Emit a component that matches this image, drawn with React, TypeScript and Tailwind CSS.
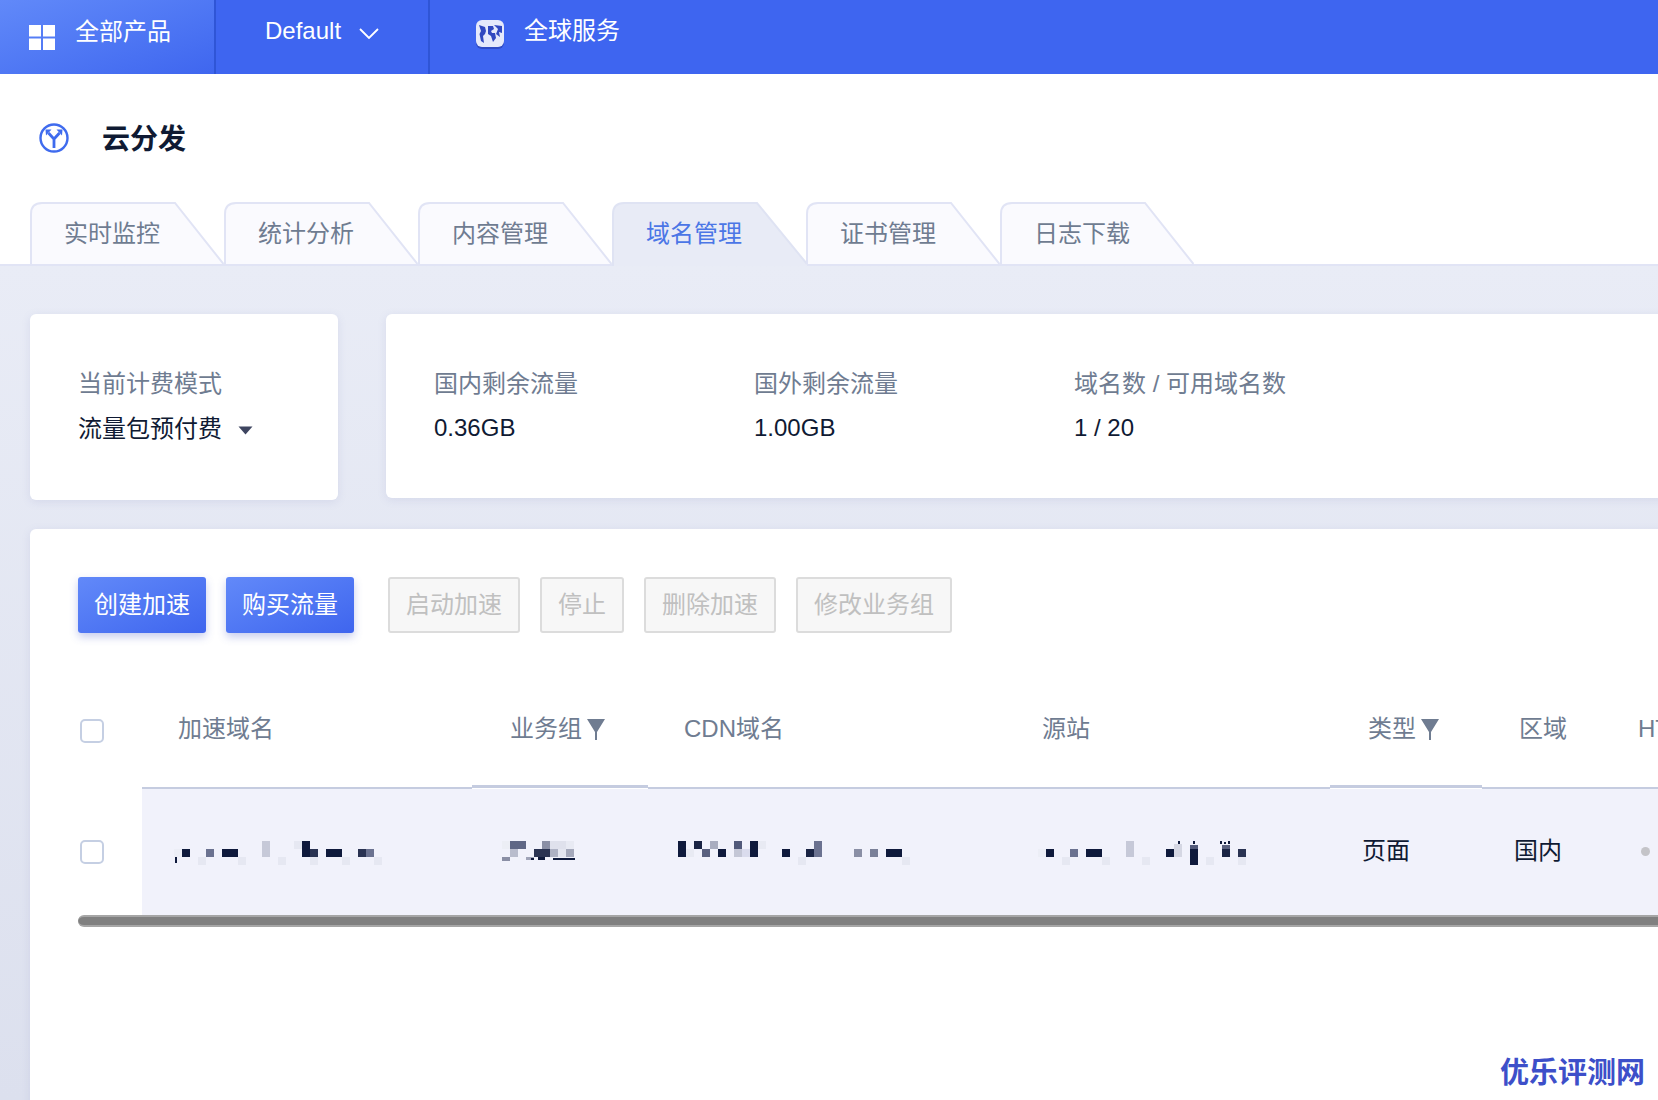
import React from "react";

const D = "#0f1a3c";
const M = "#2a3352";
const G = "#6b7290";
const S = "#c6c9d8";
const L = "#e6e8f2";
type R = [number, number, number, number, string];

const mosaic1: R[] = [
  [9, 20, 8, 8, "#eceef6"], [17, 20, 8, 8, D], [10, 28, 2, 6, D], [41, 20, 8, 8, G], [57, 20, 16, 8, D],
  [97, 12, 8, 16, S], [129, 12, 8, 8, L], [137, 12, 8, 16, D], [145, 20, 8, 8, M], [161, 20, 16, 8, D],
  [193, 20, 8, 8, M], [201, 20, 8, 8, G], [33, 28, 8, 8, L], [73, 28, 8, 8, L], [113, 28, 8, 8, L],
  [145, 28, 8, 8, L], [177, 28, 8, 8, L], [209, 28, 8, 8, L],
];
const mosaic2: R[] = [
  [12, 12, 8, 8, "#eceef5"], [20, 12, 16, 8, "#5f6785"], [20, 20, 8, 8, "#b9bdcd"], [12, 28, 8, 4, "#8a8fa5"],
  [36, 28, 8, 3, "#a0a4b8"], [52, 12, 8, 8, "#8a8fa5"], [44, 20, 16, 8, M], [60, 12, 8, 8, "#dfe1ec"],
  [68, 12, 8, 8, "#dfe1ec"], [76, 12, 8, 8, "#e8eaf3"], [60, 20, 8, 8, "#aeb2c4"], [68, 20, 8, 8, "#e4e6f0"],
  [76, 20, 8, 8, "#a5a9bb"], [41, 29, 3, 2, D], [48, 28, 7, 3, D], [63, 29, 8, 2, D], [71, 29, 14, 2, D],
];
const mosaic3: R[] = [
  [8, 12, 8, 16, D], [16, 20, 8, 8, "#e8eaf3"], [24, 12, 8, 8, "#1a2444"], [40, 12, 8, 8, "#a9adc0"],
  [32, 20, 8, 8, "#5a617f"], [48, 20, 8, 8, D], [64, 12, 8, 8, "#525a7a"], [64, 20, 8, 8, "#c4c7d6"],
  [72, 20, 8, 8, "#dadced"], [80, 12, 8, 16, D], [88, 12, 8, 8, "#e8eaf3"], [112, 20, 8, 8, D],
  [136, 20, 8, 8, "#1a2444"], [144, 12, 8, 16, "#6b7290"], [128, 28, 8, 8, L], [184, 20, 8, 8, "#8a8fa5"],
  [200, 20, 8, 8, "#7a8098"], [216, 20, 16, 8, D], [232, 28, 8, 8, L],
];
const mosaic4: R[] = [
  [3, 20, 8, 8, "#eceef6"], [11, 20, 8, 8, D], [35, 20, 8, 8, G], [51, 20, 16, 8, D], [91, 12, 8, 16, S],
  [131, 20, 8, 8, D], [139, 15, 8, 13, "#d5d7e3"], [155, 16, 8, 4, "#525a7a"], [155, 20, 8, 16, D],
  [143, 12, 2, 3, D], [158, 12, 2, 3, D], [187, 20, 8, 8, "#1a2444"], [187, 16, 8, 4, "#5a617f"],
  [185, 12, 2, 3, D], [189, 13, 2, 2, D], [193, 12, 2, 3, D], [203, 20, 8, 8, M], [27, 28, 8, 8, L], [67, 28, 8, 8, L], [107, 28, 8, 8, L],
  [171, 28, 8, 8, L], [203, 28, 8, 8, L],
];

function Mosaic({ cells, w }: { cells: R[]; w: number }) {
  return (
    <svg width={w} height={50} viewBox={`0 0 ${w} 50`} className="block">
      {cells.map(([x, y, cw, h, c], i) => (
        <rect key={i} x={x} y={y} width={cw} height={h} fill={c} />
      ))}
    </svg>
  );
}

function Funnel() {
  return (
    <svg width="18" height="21" viewBox="0 0 18 21" className="ml-[5px] shrink-0">
      <path d="M0 0H18L10 13V21H8V13Z" fill="#6f7c91" />
    </svg>
  );
}

function Tab({ label, active }: { label: string; active?: boolean }) {
  return (
    <div className={active ? "relative w-[194px] h-[64px] -mb-[2px] shrink-0" : "relative w-[194px] h-[62px] shrink-0"}>
      {active ? (
        <svg width="196" height="64" viewBox="0 0 196 64" className="absolute left-0 top-0">
          <path d="M1 64V12Q1 1 12 1H145L195 62V64Z" fill="#e8ebf6" />
          <path d="M1 64V12Q1 1 12 1H145L195 62" fill="none" stroke="#dfe3f3" strokeWidth="2" />
        </svg>
      ) : (
        <svg width="194" height="62" viewBox="0 0 194 62" className="absolute left-0 top-0">
          <path d="M1 62V12Q1 1 12 1H145L193.5 62Z" fill="#fafafe" />
          <path d="M1 62V12Q1 1 12 1H145L193.5 62" fill="none" stroke="#e1e4f5" strokeWidth="2" />
        </svg>
      )}
      <div className={active ? "relative h-[62px] flex items-center pl-[34px] pt-[2px] text-[24px] leading-[34px] text-[#4b76e6]" : "relative h-[62px] flex items-center pl-[34px] pt-[2px] text-[24px] leading-[34px] text-[#6f7c91]"}>
        {label}
      </div>
    </div>
  );
}

function Checkbox() {
  return <div className="w-[24px] h-[24px] rounded-[5px] border-2 border-[#c5cfe3] bg-white" />;
}

function PrimaryButton({ label }: { label: string }) {
  return (
    <button className="h-[56px] w-[128px] rounded-[3px] bg-linear-to-br from-[#6289f9] to-[#3f65ee] text-white text-[24px] shadow-[0_4px_8px_rgba(70,90,200,0.3)]">
      {label}
    </button>
  );
}

function DisabledButton({ label }: { label: string }) {
  return (
    <button className="h-[56px] px-[16px] rounded-[3px] border-2 border-[#dcdcdc] bg-[#f7f7f7] text-[#c0c0c0] text-[24px]">
      {label}
    </button>
  );
}

function Stat({ label, value, w }: { label: string; value: string; w: string }) {
  return (
    <div className={w}>
      <div className="text-[24px] leading-[34px] text-[#6f7c91]">{label}</div>
      <div className="mt-[10px] text-[24px] leading-[34px] text-[#0f1a33]">{value}</div>
    </div>
  );
}

export default function App() {
  return (
    <div className="w-[1658px] h-[1100px] overflow-hidden relative bg-white [font-family:'Liberation_Sans','Noto_Sans_CJK_SC',sans-serif]">
      {/* top bar */}
      <div className="h-[74px] flex bg-[#3e65f0] text-white text-[24px]">
        <div className="w-[216px] shrink-0 flex items-center pl-[29px] pb-[1px] border-r-2 border-[#2f55d6] bg-linear-to-br from-[#6189f9] to-[#3f66ef]">
          <svg width="26" height="25" viewBox="0 0 26 25" className="shrink-0 mb-[-1px]">
            <rect x="0" y="0" width="12" height="11.5" fill="#fff" />
            <rect x="14" y="0" width="12" height="11.5" fill="#fff" />
            <rect x="0" y="13.5" width="12" height="11.5" fill="#fff" />
            <rect x="14" y="13.5" width="12" height="11.5" fill="#fff" />
          </svg>
          <span className="ml-[20px] pb-[9px] leading-[34px]">全部产品</span>
        </div>
        <div className="w-[214px] shrink-0 flex items-center pl-[49px] border-r-2 border-[#2f55d6]">
          <span className="pb-[12px] leading-[34px]">Default</span>
          <svg width="20" height="11" viewBox="0 0 20 11" className="ml-[18px] mb-[7px]">
            <path d="M1 1L10 10L19 1" fill="none" stroke="#fff" strokeWidth="1.8" />
          </svg>
        </div>
        <div className="flex items-center pl-[46px]">
          <svg width="28" height="29" viewBox="0 0 28 29" className="shrink-0 mb-[5px]">
            <rect x="0" y="1" width="28" height="28" rx="6" fill="#2f4bc4" />
            <rect x="0" y="0" width="28" height="27" rx="6" fill="#e5e9fb" />
            <path d="M3 5L9 7L10 11L9 14L7 16L8 23L5 21L3.5 14L5 11Z" fill="#3048c0" />
            <path d="M12 6H17L18 9L15 11L16 13H19L20 18L17 22L15 16L12 14Z" fill="#3048c0" />
            <path d="M18 5L26 6L26 13L23 12L24 17L20 14L22 9Z" fill="#3048c0" />
          </svg>
          <span className="ml-[20px] pb-[12px] leading-[34px]">全球服务</span>
        </div>
      </div>

      {/* title */}
      <div className="h-[128px] flex items-center pl-[39px]">
        <svg width="30" height="30" viewBox="0 0 30 30" className="shrink-0">
          <circle cx="15" cy="15" r="13.5" fill="none" stroke="#3f6bee" strokeWidth="2.4" />
          <path d="M15 25V16L9.5 10M15 16L20.5 10" fill="none" stroke="#3f6bee" strokeWidth="2.8" />
          <path d="M6.5 6.5H12.5L7 12.5Z M23.5 6.5H17.5L23 12.5Z" fill="#3f6bee" />
        </svg>
        <span className="ml-[33px] pt-[4px] text-[28px] leading-[40px] font-bold text-[#0f1a33]">云分发</span>
      </div>

      {/* tabs */}
      <div className="flex items-start pl-[30px] h-[64px] border-b-2 border-[#e1e4f5]">
        <Tab label="实时监控" />
        <Tab label="统计分析" />
        <Tab label="内容管理" />
        <Tab label="域名管理" active />
        <Tab label="证书管理" />
        <Tab label="日志下载" />
      </div>

      {/* body */}
      <div className="h-[834px] pl-[30px] pt-[48px] bg-linear-to-b from-[#e9ecf6] to-[#dce0ee]">
        <div className="flex items-start gap-[48px]">
          <div className="w-[308px] h-[186px] shrink-0 rounded-[6px] bg-white pl-[48px] pt-[53px] shadow-[0_2px_8px_rgba(120,130,190,0.15)]">
            <div className="text-[24px] leading-[34px] text-[#6f7c91]">当前计费模式</div>
            <div className="mt-[11px] flex items-center text-[24px] leading-[34px] text-[#0f1a33]">
              流量包预付费
              <svg width="15" height="9" viewBox="0 0 15 9" className="ml-[16px] mt-[2px]">
                <path d="M0.5 0.5H14.5L7.5 8.5Z" fill="#3e4560" />
              </svg>
            </div>
          </div>
          <div className="w-[1400px] h-[184px] shrink-0 rounded-[6px] bg-white pl-[48px] pt-[53px] flex shadow-[0_2px_8px_rgba(120,130,190,0.15)]">
            <Stat label="国内剩余流量" value="0.36GB" w="w-[320px]" />
            <Stat label="国外剩余流量" value="1.00GB" w="w-[320px]" />
            <Stat label="域名数 / 可用域名数" value="1 / 20" w="w-[320px]" />
          </div>
        </div>

        {/* main card */}
        <div className="mt-[29px] w-[1700px] h-[600px] rounded-t-[6px] bg-white pl-[48px] pt-[48px] shadow-[0_2px_8px_rgba(120,130,190,0.15)]">
          <div className="flex items-start">
            <PrimaryButton label="创建加速" />
            <div className="ml-[20px]">
              <PrimaryButton label="购买流量" />
            </div>
            <div className="ml-[34px] flex gap-[20px]">
              <DisabledButton label="启动加速" />
              <DisabledButton label="停止" />
              <DisabledButton label="删除加速" />
              <DisabledButton label="修改业务组" />
            </div>
          </div>

          {/* table header */}
          <div className="mt-[34px] flex h-[122px] text-[24px] leading-[34px] text-[#6f7c91]">
            <div className="w-[64px] shrink-0 pl-[2px] pt-[52px]">
              <Checkbox />
            </div>
            <div className="w-[330px] shrink-0 pl-[36px] pt-[45px] border-b-2 border-[#c5cce0]">加速域名</div>
            <div className="w-[176px] shrink-0 h-[121px] pl-[38px] pt-[45px] border-b-[3px] border-[#c5cce0]">
              <div className="flex items-center h-[34px]">业务组<Funnel /></div>
            </div>
            <div className="w-[358px] shrink-0 pl-[36px] pt-[45px] border-b-2 border-[#c5cce0]">CDN域名</div>
            <div className="w-[324px] shrink-0 pl-[36px] pt-[45px] border-b-2 border-[#c5cce0]">源站</div>
            <div className="w-[152px] shrink-0 h-[121px] pl-[38px] pt-[45px] border-b-[3px] border-[#c5cce0]">
              <div className="flex items-center h-[34px]">类型<Funnel /></div>
            </div>
            <div className="w-[121px] shrink-0 pl-[37px] pt-[45px] border-b-2 border-[#c5cce0]">区域</div>
            <div className="w-[200px] shrink-0 pl-[35px] pt-[45px] border-b-2 border-[#c5cce0]">HTTPS</div>
          </div>

          {/* row */}
          <div className="flex h-[126px] text-[24px] leading-[34px] text-[#0f1a33]">
            <div className="w-[64px] shrink-0 pl-[2px] pt-[51px]">
              <Checkbox />
            </div>
            <div className="flex-1 flex bg-[#f1f2fb]">
              <div className="w-[330px] shrink-0 pl-[23px] pt-[40px]"><Mosaic cells={mosaic1} w={240} /></div>
              <div className="w-[176px] shrink-0 pl-[18px] pt-[40px]"><Mosaic cells={mosaic2} w={100} /></div>
              <div className="w-[358px] shrink-0 pl-[22px] pt-[40px]"><Mosaic cells={mosaic3} w={250} /></div>
              <div className="w-[324px] shrink-0 pl-[29px] pt-[40px]"><Mosaic cells={mosaic4} w={220} /></div>
              <div className="w-[152px] shrink-0 pl-[32px] pt-[45px]">页面</div>
              <div className="w-[121px] shrink-0 pl-[32px] pt-[45px]">国内</div>
              <div className="w-[200px] shrink-0 pl-[38px] pt-[58px]">
                <div className="w-[9px] h-[9px] rounded-full bg-[#c4c4c8]" />
              </div>
            </div>
          </div>

          {/* scrollbar */}
          <div className="h-[12px] rounded-l-[6px] bg-[#808080] border-y-2 border-y-[#a6a6a6]" />
        </div>
      </div>

      <div className="absolute left-[1500px] top-[1053px] text-[29px] leading-[40px] font-bold text-[#3d4fc9]">优乐评测网</div>
    </div>
  );
}
